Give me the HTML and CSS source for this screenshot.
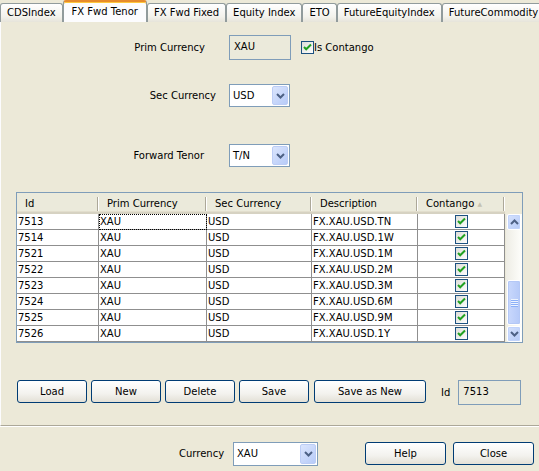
FILE: index.html
```html
<!DOCTYPE html>
<html lang="en">
<head>
  <meta charset="UTF-8" />
  <title>FX Fwd Tenor</title>
  <link rel="stylesheet" href="styles.css">
</head>
<body>
  <svg class="defs" width="0" height="0">
    <symbol id="check" viewBox="0 0 13 13">
      <rect x="0.5" y="0.5" width="12" height="12" fill="url(#chkbg)" stroke="#1c5180"/>
      <path d="M3 6 L5.2 8.3 L10 3.5" fill="none" stroke="#21a121" stroke-width="2"/>
    </symbol>
    <linearGradient id="chkbg" x1="0" y1="0" x2="1" y2="1">
      <stop offset="0" stop-color="#dcdcd7"/>
      <stop offset="1" stop-color="#ffffff"/>
    </linearGradient>
    <symbol id="chev-down" viewBox="0 0 9 6">
      <path d="M1 1 L4.5 4.5 L8 1" fill="none" stroke="#4d6185" stroke-width="2"/>
    </symbol>
    <symbol id="chev-up" viewBox="0 0 9 6">
      <path d="M1 5 L4.5 1.5 L8 5" fill="none" stroke="#4d6185" stroke-width="2"/>
    </symbol>
  </svg>

  <div class="tabs">
    <div class="tab">CDSIndex</div>
    <div class="tab active">FX Fwd Tenor</div>
    <div class="tab">FX Fwd Fixed</div>
    <div class="tab">Equity Index</div>
    <div class="tab">ETO</div>
    <div class="tab">FutureEquityIndex</div>
    <div class="tab">FutureCommodity</div>
  </div>

  <div class="panel">
    <div class="form">
      <div class="row row-prim">
        <label class="field-label">Prim Currency</label>
        <div class="textbox disabled">XAU</div>
        <div class="check-field">
          <svg class="checkbox"><use href="#check"/></svg>
          <span>Is Contango</span>
        </div>
      </div>
      <div class="row row-sec">
        <label class="field-label">Sec Currency</label>
        <div class="combo">
          <span>USD</span>
          <span class="combo-btn"><svg><use href="#chev-down"/></svg></span>
        </div>
      </div>
      <div class="row row-tenor">
        <label class="field-label">Forward Tenor</label>
        <div class="combo">
          <span>T/N</span>
          <span class="combo-btn"><svg><use href="#chev-down"/></svg></span>
        </div>
      </div>
    </div>

    <div class="grid">
      <table class="grid-table">
        <colgroup>
          <col class="c-id"><col class="c-prim"><col class="c-sec"><col class="c-desc"><col class="c-cont">
        </colgroup>
        <thead>
          <tr>
            <th>Id</th>
            <th>Prim Currency</th>
            <th>Sec Currency</th>
            <th>Description</th>
            <th>Contango <span class="sort">&#9650;</span></th>
          </tr>
        </thead>
        <tbody id="rows"></tbody>
      </table>
      <div class="scroll-col">
        <div class="scroll-head"></div>
        <div class="scrollbar">
          <div class="sb-btn"><svg><use href="#chev-up"/></svg></div>
          <div class="sb-track">
            <div class="sb-thumb">
              <svg width="7" height="8" viewBox="0 0 7 8">
                <path d="M0 0.5H7M0 2.5H7M0 4.5H7M0 6.5H7" stroke="#eef4fe"/>
                <path d="M0 1.5H7M0 3.5H7M0 5.5H7M0 7.5H7" stroke="#8cb0f8"/>
              </svg>
            </div>
          </div>
          <div class="sb-btn"><svg><use href="#chev-down"/></svg></div>
        </div>
      </div>
    </div>

    <div class="actions">
      <button class="btn">Load</button>
      <button class="btn">New</button>
      <button class="btn">Delete</button>
      <button class="btn">Save</button>
      <button class="btn btn-wide">Save as New</button>
      <span class="id-label">Id</span>
      <div class="textbox disabled id-box">7513</div>
    </div>
  </div>

  <div class="footer">
    <span class="footer-label">Currency</span>
    <div class="combo combo-wide">
      <span>XAU</span>
      <span class="combo-btn"><svg><use href="#chev-down"/></svg></span>
    </div>
    <button class="btn btn-foot help">Help</button>
    <button class="btn btn-foot">Close</button>
  </div>

  <script>
    const rows = [
      ['7513', 'XAU', 'USD', 'FX.XAU.USD.TN'],
      ['7514', 'XAU', 'USD', 'FX.XAU.USD.1W'],
      ['7521', 'XAU', 'USD', 'FX.XAU.USD.1M'],
      ['7522', 'XAU', 'USD', 'FX.XAU.USD.2M'],
      ['7523', 'XAU', 'USD', 'FX.XAU.USD.3M'],
      ['7524', 'XAU', 'USD', 'FX.XAU.USD.6M'],
      ['7525', 'XAU', 'USD', 'FX.XAU.USD.9M'],
      ['7526', 'XAU', 'USD', 'FX.XAU.USD.1Y']
    ];
    const body = document.getElementById('rows');
    rows.forEach((r, i) => {
      const tr = document.createElement('tr');
      tr.innerHTML = `
        <td>${r[0]}</td>
        <td class="${i === 0 ? 'focus' : ''}">${r[1]}</td>
        <td>${r[2]}</td>
        <td>${r[3]}</td>
        <td class="cell-check"><svg class="checkbox"><use href="#check"/></svg></td>`;
      body.appendChild(tr);
    });
  </script>
</body>
</html>
```

FILE: styles.css
```css
body {
  margin: 0;
  width: 539px;
  height: 471px;
  overflow: hidden;
  background: #ece9d8;
  font-family: "DejaVu Sans", sans-serif;
  font-size: 10px;
  color: #000;
}
.defs {
  position: absolute;
}
.tabs {
  display: flex;
  align-items: flex-end;
  height: 22px;
  white-space: nowrap;
}
.tab {
  box-sizing: border-box;
  height: 19px;
  padding: 0 6px;
  border: 1px solid #919b9c;
  border-bottom: none;
  border-radius: 3px 3px 0 0;
  background: linear-gradient(#ffffff, #f3f2ec 70%, #e6e4da);
  line-height: 18px;
  flex: none;
}
.tab.active {
  height: 22px;
  padding: 0 8px;
  background: #fcfcfe;
  border-top: 2px solid #e68b2c;
  box-shadow: inset 0 1px #ffc73c;
  line-height: 19px;
}
.panel {
  box-sizing: border-box;
  height: 404px;
  border-left: 1px solid #fcfcfe;
  border-bottom: 1px solid #aca899;
}
.form {
  padding-top: 13px;
}
.row {
  display: flex;
  align-items: center;
}
.field-label {
  box-sizing: border-box;
  width: 228px;
  text-align: right;
}
.row-prim .field-label { padding-right: 24px; }
.row-sec { margin-top: 24px; }
.row-sec .field-label { padding-right: 13px; }
.row-tenor { margin-top: 37px; }
.row-tenor .field-label { padding-right: 25px; }
.textbox {
  box-sizing: border-box;
  height: 25px;
  width: 62px;
  border: 1px solid #7f9db9;
  background: #fff;
  padding-left: 4px;
  line-height: 22px;
}
.textbox.disabled {
  background: #ebeadb;
}
.check-field {
  display: flex;
  align-items: center;
  margin-left: 10px;
}
.checkbox {
  width: 13px;
  height: 13px;
  display: block;
}
.combo {
  box-sizing: border-box;
  display: flex;
  align-items: center;
  justify-content: space-between;
  width: 61px;
  height: 23px;
  padding: 1px 1px 1px 3px;
  border: 1px solid #7f9db9;
  background: #fff;
}
.combo-btn {
  box-sizing: border-box;
  width: 16px;
  height: 19px;
  border: 1px solid #bccdf6;
  border-radius: 2px;
  background: linear-gradient(135deg, #dbe5fd, #b7cbf8);
  display: flex;
  align-items: center;
  justify-content: center;
}
.combo-btn svg {
  width: 9px;
  height: 6px;
}
.grid {
  display: flex;
  width: 507px;
  height: 151px;
  box-sizing: border-box;
  margin: 25px 0 0 15px;
  border: 1px solid #7f9db9;
}
.grid-table {
  table-layout: fixed;
  width: 488px;
  border-spacing: 0;
  align-self: flex-start;
}
.c-id { width: 82px; }
.c-prim { width: 108px; }
.c-sec { width: 105px; }
.c-desc { width: 106px; }
.c-cont { width: 87px; }
.grid-table th {
  height: 21px;
  padding: 1px 0 0 8px;
  box-sizing: border-box;
  text-align: left;
  font-weight: normal;
  white-space: nowrap;
  border-bottom: 2px solid #d6d2c2;
  background:
    linear-gradient(#aca899, #aca899) no-repeat right 1px top 4px / 1px 14px,
    linear-gradient(#ffffff, #ffffff) no-repeat right 0 top 4px / 1px 14px,
    #ebeadb;
  box-shadow: inset 0 -1px #e2decd;
}
.sort {
  font-size: 6px;
  color: #c5c2b2;
  vertical-align: 1px;
}
.grid-table td {
  height: 15px;
  padding: 0 0 0 1px;
  line-height: 15px;
  border-right: 1px solid #8f8f8f;
  border-bottom: 1px solid #8f8f8f;
  background: #fff;
  white-space: nowrap;
  overflow: hidden;
}
.grid-table td.focus {
  outline: 1px dotted #000;
  outline-offset: -1px;
}
.grid-table td.cell-check {
  padding: 0;
}
.cell-check .checkbox {
  margin: 0 auto;
}
.scroll-col {
  width: 17px;
  margin-left: 1px;
  display: flex;
  flex-direction: column;
}
.scroll-head {
  height: 21px;
}
.scrollbar {
  height: 128px;
  display: flex;
  flex-direction: column;
  background: linear-gradient(90deg, #eeede5, #fefefb);
}
.sb-btn {
  box-sizing: border-box;
  height: 16px;
  margin: 0 1px;
  border: 1px solid #fff;
  border-radius: 2px;
  background: linear-gradient(135deg, #d6e2fd, #b5caf7);
  box-shadow: inset 0 0 0 1px #c1d3fb;
  display: flex;
  align-items: center;
  justify-content: center;
}
.sb-btn svg {
  width: 9px;
  height: 6px;
}
.sb-track {
  flex: 1;
  display: flex;
  flex-direction: column;
  justify-content: flex-end;
  padding-bottom: 1px;
}
.sb-thumb {
  box-sizing: border-box;
  height: 45px;
  margin: 0 1px;
  border: 1px solid #fff;
  border-radius: 2px;
  background: linear-gradient(90deg, #c9d8fc, #b5c9f8);
  box-shadow: inset 0 0 0 1px #b4c8f6;
  display: flex;
  align-items: center;
  justify-content: center;
}
.actions {
  display: flex;
  align-items: flex-start;
  gap: 4px;
  margin: 37px 0 0 16px;
}
.btn {
  box-sizing: border-box;
  width: 70px;
  height: 23px;
  padding: 0;
  border: 1px solid #003c74;
  border-radius: 3px;
  background: linear-gradient(#ffffff, #f3f2ee 60%, #e3e0d6);
  font-family: "DejaVu Sans", sans-serif;
  font-size: 10px;
  color: #000;
}
.btn-wide {
  width: 112px;
  margin-left: 1px;
}
.id-label {
  margin-left: 11px;
  line-height: 25px;
}
.id-box {
  margin-left: 4px;
  width: 63px;
}
.footer {
  box-sizing: border-box;
  height: 45px;
  border-top: 1px solid #fff;
  display: flex;
  align-items: center;
  padding: 9px 0 0 179px;
}
.footer-label {
  width: 54px;
}
.combo-wide {
  width: 85px;
  height: 24px;
}
.combo-wide .combo-btn {
  height: 20px;
}
.btn-foot {
  width: 81px;
}
.help {
  margin-left: 47px;
  margin-right: 7px;
}
```
